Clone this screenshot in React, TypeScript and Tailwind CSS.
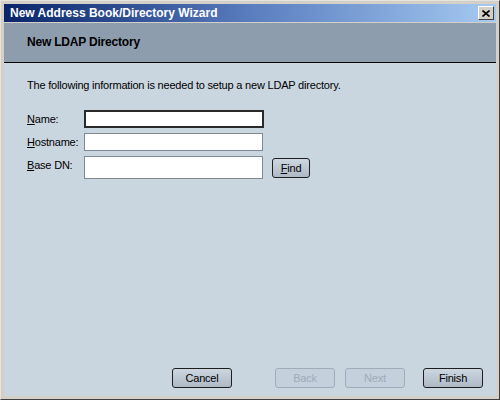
import React from 'react';

const font = { fontFamily: '"Liberation Sans", Arial, sans-serif' };

const Btn: React.FC<{ label: React.ReactNode; disabled?: boolean; className?: string }> = ({ label, disabled, className }) => (
  <div
    className={`h-[20px] rounded-[3px] border flex items-center justify-center text-[11px] ${
      disabled
        ? 'border-[#9fadbb] text-[#9eabb8] bg-[#c4d0dc]'
        : 'border-[#1e1e1e] text-black bg-gradient-to-b from-[#cdd7e1] to-[#aeb9c6]'
    } ${className ?? ''}`}
  >
    {label}
  </div>
);

export default function App() {
  return (
    <div style={font} className="w-[500px] h-[400px] bg-[#d4d0c8] border border-t-[#e6e4df] border-l-[#e6e4df] border-r-[#404040] border-b-[#404040] p-[3px] flex flex-col overflow-hidden">
      {/* title bar */}
      <div className="h-[18px] flex items-center justify-between pl-[6px] pr-[2px] bg-gradient-to-r from-[#0a246a] via-[#5a7dbf] to-[#a6caf0]">
        <span className="text-white font-bold text-[12px]">New Address Book/Directory Wizard</span>
        <div className="w-[16px] h-[14px] bg-[#d4d0c8] border border-t-white border-l-white border-r-[#404040] border-b-[#404040] flex items-center justify-center">
          <svg width="8" height="7" viewBox="0 0 8 7">
            <path d="M0.5 0.5 L7.5 6.5 M7.5 0.5 L0.5 6.5" stroke="black" strokeWidth="1.6" />
          </svg>
        </div>
      </div>
      <div className="h-[1px] bg-[#d4d0c8]" />
      {/* header band */}
      <div className="h-[39px] bg-[#8d9dae] flex items-center pl-[23px] pb-[2px]">
        <span className="text-black font-bold text-[12px] tracking-[-0.2px]">New LDAP Directory</span>
      </div>
      <div className="h-[1px] bg-black" />
      {/* body */}
      <div className="flex-1 bg-[#c9d5df] flex flex-col pl-[23px] pr-[13px] pt-[15px] pb-[8px] text-[11px] leading-[14px] tracking-[-0.2px] text-black">
        <p>The following information is needed to setup a new LDAP directory.</p>
        <div className="mt-[18px] flex flex-col gap-[5px]">
          <div className="flex items-center">
            <span className="w-[57px]"><u>N</u>ame:</span>
            <div className="w-[180px] h-[18px] bg-white border-2 border-[#2a2a2a]" />
          </div>
          <div className="flex items-center">
            <span className="w-[57px]"><u>H</u>ostname:</span>
            <div className="w-[179px] h-[18px] bg-white border border-[#7e8a96]" />
          </div>
          <div className="flex items-start">
            <span className="w-[57px] pt-[2px]"><u>B</u>ase DN:</span>
            <div className="w-[179px] h-[23px] bg-white border border-[#7e8a96]" />
            <Btn className="ml-[9px] mt-[2px] w-[38px] h-[19px]" label={<><u>F</u>ind</>} />
          </div>
        </div>
        <div className="mt-auto flex items-center">
          <Btn className="ml-[145px] w-[60px]" label="Cancel" />
          <Btn disabled className="ml-[43px] w-[60px]" label="Back" />
          <Btn disabled className="ml-[10px] w-[60px]" label="Next" />
          <Btn className="ml-[18px] w-[60px]" label="Finish" />
        </div>
      </div>
    </div>
  );
}
